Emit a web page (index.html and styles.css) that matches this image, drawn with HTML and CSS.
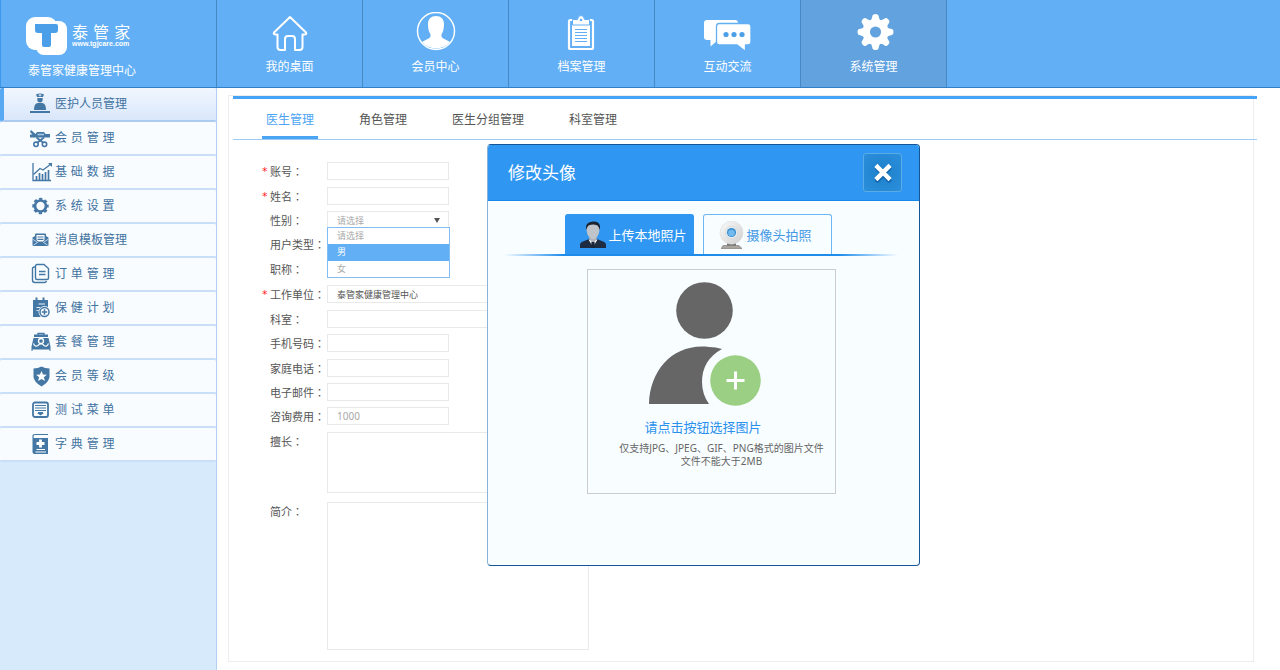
FILE: index.html
```html
<!DOCTYPE html>
<html lang="zh-CN">
<head>
<meta charset="utf-8">
<title>泰管家健康管理中心</title>
<link rel="stylesheet" href="styles.css">
</head>
<body>
<header class="topbar">
  <div class="brand">
    <div class="brand-main">
      <svg class="brand-logo" viewBox="0 0 42 40" aria-hidden="true">
        <rect x="0" y="1" width="31" height="33" rx="9" fill="#fff"/>
        <rect x="10" y="5" width="31" height="34" rx="8" fill="#fff"/>
        <path d="M9 8H30Q32 8 32 10V14Q32 17 29 17H25V29Q25 31 23 31H18Q16 31 16 29V17H12Q9 17 9 14Z" fill="#4b9fe8"/>
      </svg>
      <div class="brand-words">
        <span class="brand-name">泰 管 家</span>
        <span class="brand-url">www.tgjcare.com</span>
      </div>
    </div>
    <span class="brand-center">泰管家健康管理中心</span>
  </div>
  <nav class="mainnav">
    <a class="navitem" href="#">
      <svg class="navicon" viewBox="0 0 48 40" fill="none" stroke="#fff" stroke-width="2" stroke-linejoin="round" aria-hidden="true"><path d="M24 5L40 20.500Q41 22.500 38.500 22.500H36.500V35Q36.500 38 33.500 38H29V27Q29 24 26 24H22Q19 24 19 27V38H14.500Q11.500 38 11.500 35V22.500H9.500Q7 22.500 8 20.500Z"/></svg>
      <span>我的桌面</span>
    </a>
    <a class="navitem" href="#">
      <svg class="navicon" viewBox="0 0 48 40" aria-hidden="true"><circle cx="24" cy="19" r="18.500" fill="none" stroke="#fff" stroke-width="1.500"/><path d="M24 4C29 4 32 7 32 12C32 17 31 20 29.500 22.500C29 25 30.500 26 32.500 27L38 30A18.500 18.500 0 0 1 10 30L15.500 27C17.500 26 19 25 18.500 22.500C17 20 16 17 16 12C16 7 19 4 24 4Z" fill="#fff"/></svg>
      <span>会员中心</span>
    </a>
    <a class="navitem" href="#">
      <svg class="navicon" viewBox="0 0 48 40" aria-hidden="true"><rect x="11" y="8" width="24" height="29" rx="1.500" fill="none" stroke="#fff" stroke-width="2.200"/><rect x="14" y="11" width="18" height="23" fill="#fff"/><path d="M14.500 7.500H19.500Q20 3.500 23 3.500T26.500 7.500H31.500V13H14.500Z" fill="#fff" stroke="#62aff5" stroke-width="1"/><circle cx="23" cy="8" r="1.300" fill="#62aff5"/><path d="M17 17.500H29M17 20.500H29M17 23.500H29M17 26.500H29M17 29.500H29" stroke="#62aff5" stroke-width="1.200"/></svg>
      <span>档案管理</span>
    </a>
    <a class="navitem" href="#">
      <svg class="navicon" viewBox="0 0 48 40" aria-hidden="true"><path d="M3 8H31Q34 8 34 11V28H14L6.500 34.500V28H3Q0 28 0 25V11Q0 8 3 8Z" fill="#fff"/><path d="M15 11.500H44Q47 11.500 47 14.500V30Q47 33 44 33H41.500V39.500L33 33H15Q12.500 33 12.500 30V14.500Q12.500 11.500 15 11.500Z" fill="#fff" stroke="#62aff5" stroke-width="1.300"/><circle cx="22" cy="22.500" r="2.600" fill="#4d9fe8"/><circle cx="30" cy="22.500" r="2.600" fill="#4d9fe8"/><circle cx="38" cy="22.500" r="2.600" fill="#4d9fe8"/></svg>
      <span>互动交流</span>
    </a>
    <a class="navitem navitem-active" href="#">
      <svg class="navicon" viewBox="0 0 48 40" aria-hidden="true">
        <g transform="translate(25.500 20)" fill="#fff">
          <path id="tooth" d="M-5 -11C-3.500 -13 -3.500 -15 -3 -16.500Q-2.500 -18 0 -18T3 -16.500C3.500 -15 3.500 -13 5 -11Z"/>
          <use href="#tooth" transform="rotate(45)"/><use href="#tooth" transform="rotate(90)"/><use href="#tooth" transform="rotate(135)"/><use href="#tooth" transform="rotate(180)"/><use href="#tooth" transform="rotate(225)"/><use href="#tooth" transform="rotate(270)"/><use href="#tooth" transform="rotate(315)"/>
          <circle r="9.300" fill="none" stroke="#fff" stroke-width="7.500"/>
        </g>
      </svg>
      <span>系统管理</span>
    </a>
  </nav>
</header>

<div class="layout">
  <nav class="sidebar">
    <a class="sideitem sideitem-active" href="#"><svg class="sideicon" viewBox="0 0 22 22" aria-hidden="true"><path d="M6 1.500Q10 -0.500 14 1.500L13 4H7Z"/><path d="M8.500 2.200H11.500M10 1V3.500" stroke="#fff" stroke-width="0.700"/><path d="M7.300 5H12.700V6.500A2.700 3 0 0 1 7.300 6.500Z"/><path d="M7.500 10H12.500Q16 10.500 16 17H13.500V13.500V17H6.500V13.500V17H4Q4 10.500 7.500 10Z"/><path d="M0 18H20V20H0Z"/></svg>医护人员管理</a>
    <a class="sideitem" href="#"><svg class="sideicon" viewBox="0 0 22 22" aria-hidden="true"><path d="M1 3L5.500 7H20V10.500H0V7.500H2.500L0 5Z"/><path d="M5.500 7L7 5H14L15.500 7Z"/><path d="M7.500 7.500H14" stroke="#a9c8e2" stroke-width="1.600"/><path d="M6.500 10.500L13 15.500M14 10.500L7.500 15.500" stroke="#4577a5" stroke-width="1.800"/><g fill="none" stroke="#4577a5" stroke-width="1.600"><circle cx="6" cy="17.300" r="2.200"/><circle cx="14.500" cy="17.300" r="2.200"/></g></svg>会 员 管 理</a>
    <a class="sideitem" href="#"><svg class="sideicon" viewBox="0 0 22 22" aria-hidden="true"><g fill="none" stroke="#4577a5"><path d="M3 2V19.500H21" stroke-width="1.300"/><path d="M6.500 19V15M9.500 19V12M12.500 19V13M15.500 19V11M18.500 19V9" stroke-width="1.700"/><path d="M3.500 13.500L10 7.500L13 9L21 3" stroke-width="1.300"/></g><path d="M18 2H22V6Z"/></svg>基 础 数 据</a>
    <a class="sideitem" href="#"><svg class="sideicon" viewBox="0 0 22 22" aria-hidden="true"><circle cx="10.500" cy="11" r="5.500" fill="none" stroke="#4577a5" stroke-width="2.700"/><circle cx="10.500" cy="11" r="7.200" fill="none" stroke="#4577a5" stroke-width="2" stroke-dasharray="3.200 2.450" stroke-dashoffset="1.600"/></svg>系 统 设 置</a>
    <a class="sideitem" href="#"><svg class="sideicon" viewBox="0 0 22 22" aria-hidden="true"><path d="M2.500 8.500L5 7V5.500Q5 4.500 6 4.500H15Q16 4.500 16 5.500V7L18.500 8.500V16Q18.500 17 17.500 17H3.500Q2.500 17 2.500 16Z"/><path d="M6.500 6H14.500V11L13 12.500H8L6.500 11Z" fill="#fff"/><path d="M7.500 8H13.500M7.500 10.300H13.500" stroke="#4577a5" stroke-width="1.200"/><path d="M2.500 10L7.500 13.500L3.500 16M18.500 10L13.500 13.500L17.500 16" stroke="#dcebf8" stroke-width="0.800" fill="none"/></svg>消息模板管理</a>
    <a class="sideitem" href="#"><svg class="sideicon" viewBox="0 0 22 22" aria-hidden="true"><g fill="none" stroke="#4577a5" stroke-width="1.400"><path d="M5.500 3Q5.500 1.500 7 1.500H14L18.500 5.500V15Q18.500 16.500 17 16.500H7Q5.500 16.500 5.500 15Z"/><path d="M5 4H4.500Q2.500 4 2.500 6V17Q2.500 19.500 5 19.500H14.500Q16 19.500 16.500 18"/><path d="M9 8.500H15.500M9 11.500H15.500"/></g></svg>订 单 管 理</a>
    <a class="sideitem" href="#"><svg class="sideicon" viewBox="0 0 22 22" aria-hidden="true"><path d="M3 3H5.500V0.500H7.500V3H12.500V0.500H14.500V3H18V20H3Z"/><path d="M8.500 7H15M6.500 10.500H10M6.500 13.500H8.500" stroke="#e6f1fb" stroke-width="1.200"/><circle cx="14.500" cy="15" r="6" fill="#f9fcff"/><circle cx="14.500" cy="15" r="4.500" fill="none" stroke="#4577a5" stroke-width="1.500"/><path d="M11.800 15H17.200M14.500 12.300V17.700" stroke="#4577a5" stroke-width="1.500"/></svg>保 健 计 划</a>
    <a class="sideitem" href="#"><svg class="sideicon" viewBox="0 0 22 22" aria-hidden="true"><path d="M8 4V2.500H14V4" fill="none" stroke="#4577a5" stroke-width="1.300"/><path d="M4 3.500H18V6H4ZM3.500 7H18.500L20.500 15.500V20H19.500V18.500H2.500V20H1.500V15.500Z"/><circle cx="11" cy="10" r="2.500" fill="none" stroke="#fff" stroke-width="1.300"/><path d="M3.500 12.500Q5 16.500 8 14.500L9.500 13H12.500L14 14.500Q17 16.500 18.500 12.500" fill="none" stroke="#fff" stroke-width="1.200"/></svg>套 餐 管 理</a>
    <a class="sideitem" href="#"><svg class="sideicon" viewBox="0 0 22 22" aria-hidden="true"><path d="M11.500 1.500Q15 3.500 19.500 3.500V12Q19 17 11.500 21.500Q4 17 3.500 12V3.500Q8 3.500 11.500 1.500Z"/><path d="M11.500 6L13 9.500L16.800 9.800L13.900 12.200L14.900 15.900L11.500 13.900L8.100 15.900L9.100 12.200L6.200 9.800L10 9.500Z" fill="#fff"/></svg>会 员 等 级</a>
    <a class="sideitem" href="#"><svg class="sideicon" viewBox="0 0 22 22" aria-hidden="true"><rect x="3" y="3.500" width="15" height="14.500" rx="2" fill="none" stroke="#4577a5" stroke-width="1.800"/><path d="M5 6.500H16M5 9H16M5 11.500H16" stroke="#4577a5" stroke-width="1.100"/><path d="M8 13H13V14H14L10.500 16.500L7 14H8Z"/></svg>测 试 菜 单</a>
    <a class="sideitem" href="#"><svg class="sideicon" viewBox="0 0 22 22" aria-hidden="true"><path d="M18 1.500H5Q3 1.500 3 3.500V5" fill="none" stroke="#4577a5" stroke-width="1.200"/><path d="M2.500 5H18V21H4.500Q2.500 21 2.500 19Z"/><path d="M10.500 6.500V14.500M6.500 10.500H14.500" stroke="#fff" stroke-width="2.800"/><path d="M6.500 16.500H15M5.500 19H16" stroke="#fff" stroke-width="1"/></svg>字 典 管 理</a>
  </nav>

  <main class="panel">
    <div class="tabs" role="tablist">
      <button class="tab tab-active" role="tab" aria-selected="true">医生管理</button>
      <button class="tab" role="tab">角色管理</button>
      <button class="tab" role="tab">医生分组管理</button>
      <button class="tab" role="tab">科室管理</button>
    </div>
    <form class="form">
      <div class="row"><label class="label required" for="account">账号<span class="colon" lang="zh-TW">：</span></label><input class="field" id="account" type="text"></div>
      <div class="row row-tight"><label class="label required" for="name">姓名<span class="colon" lang="zh-TW">：</span></label><input class="field" id="name" type="text"></div>
      <div class="row row-tight"><label class="label" for="gender">性别<span class="colon" lang="zh-TW">：</span></label>
        <div class="selectbox">
          <select class="field select" id="gender"><option>请选择</option><option>男</option><option>女</option></select>
          <ul class="options" role="listbox" aria-label="性别">
            <li class="option" role="option">请选择</li>
            <li class="option option-active" role="option" aria-selected="true">男</li>
            <li class="option" role="option">女</li>
          </ul>
        </div>
      </div>
      <div class="row"><span class="label">用户类型<span class="colon" lang="zh-TW">：</span></span></div>
      <div class="row"><span class="label">职称<span class="colon" lang="zh-TW">：</span></span></div>
      <div class="row"><label class="label required" for="unit">工作单位<span class="colon" lang="zh-TW">：</span></label><input class="field field-wide" id="unit" type="text" value="泰管家健康管理中心"></div>
      <div class="row row-tight"><label class="label" for="dept">科室<span class="colon" lang="zh-TW">：</span></label><input class="field field-wide" id="dept" type="text"></div>
      <div class="row"><label class="label" for="mobile">手机号码<span class="colon" lang="zh-TW">：</span></label><input class="field" id="mobile" type="text"></div>
      <div class="row row-tight"><label class="label" for="phone">家庭电话<span class="colon" lang="zh-TW">：</span></label><input class="field" id="phone" type="text"></div>
      <div class="row row-tight"><label class="label" for="email">电子邮件<span class="colon" lang="zh-TW">：</span></label><input class="field" id="email" type="text"></div>
      <div class="row"><label class="label" for="fee">咨询费用<span class="colon" lang="zh-TW">：</span></label><input class="field field-number" id="fee" type="text" placeholder="1000"></div>
      <div class="row row-area"><label class="label" for="skill">擅长<span class="colon" lang="zh-TW">：</span></label><textarea class="field field-wide area" id="skill"></textarea></div>
      <div class="row row-area"><label class="label" for="intro">简介<span class="colon" lang="zh-TW">：</span></label><textarea class="field field-wide area area-tall" id="intro"></textarea></div>
    </form>
  </main>
</div>

<section class="dialog" role="dialog" aria-labelledby="dialog-title">
  <div class="dialog-head">
    <h2 class="dialog-title" id="dialog-title">修改头像</h2>
    <button class="close" aria-label="关闭"><svg class="close-icon" viewBox="0 0 20 20" aria-hidden="true"><path d="M4.500 5L16 17M16 5L4.500 17" stroke="#1264ac" stroke-width="5" stroke-linecap="round"/><path d="M4.500 4L15.500 15M15.500 4L4.500 15" stroke="#fff" stroke-width="4.500" stroke-linecap="square"/></svg></button>
  </div>
  <div class="dialog-body">
    <div class="phototabs" role="tablist">
      <button class="phototab phototab-active" role="tab" aria-selected="true">
        <svg class="photoicon" viewBox="0 0 28 28" aria-hidden="true"><path d="M1 27V24Q1 21.500 4 20.500L10 18H18L24 20.500Q27 21.500 27 24V27Z" fill="#1d2c40"/><path d="M9.500 18.500L14 26L18.500 18.500Z" fill="#fff"/><path d="M12.500 20.500H15.500L16 27H12Z" fill="#172536"/><path d="M10.500 15H17.500V19L14 21L10.500 19Z" fill="#aeb4ba"/><path d="M7.500 8Q7 1 14 1T20.500 8Q20.500 13 17.500 16.500Q14 19.500 10.500 16.500Q7.500 13 7.500 8Z" fill="#bec4c9"/><path d="M7 9Q5.500 1 14 0.500T21 9Q20 6 18.500 4.500Q14 2.500 9.500 4.500Q8 6 7 9Z" fill="#192331"/></svg>
        <span>上传本地照片</span>
      </button>
      <button class="phototab" role="tab">
        <svg class="photoicon" viewBox="0 0 28 28" aria-hidden="true"><defs><linearGradient id="shell" x1="0" y1="0" x2="1" y2="1"><stop offset="0" stop-color="#fafafa"/><stop offset="1" stop-color="#cfcfcf"/></linearGradient></defs><path d="M10 22H19V25H10Z" fill="#777"/><path d="M6 24.500H22L24.500 27V28H4.500V27Z" fill="#aaa49f" stroke="#777" stroke-width="0.600"/><circle cx="14.500" cy="11.700" r="11.500" fill="url(#shell)" stroke="#d9d9d9" stroke-width="0.500"/><circle cx="14.500" cy="11.500" r="6.200" fill="#e9edef" stroke="#cdd2d5" stroke-width="0.600"/><circle cx="14.500" cy="11.500" r="4.600" fill="#3a8fcd"/><circle cx="14.500" cy="12" r="3.300" fill="#73baf0"/></svg>
        <span>摄像头拍照</span>
      </button>
    </div>
    <div class="divider"></div>
    <div class="upload">
      <button class="upload-button">
        <svg class="avatar" viewBox="0 0 112 126" aria-hidden="true"><circle cx="55.500" cy="28.500" r="28.300" fill="#666"/><path d="M0 122C1 87 25 61 60 65Q67 65 73 67Q53 78 53 100Q53 112 60 122Z" fill="#666"/><circle cx="86.500" cy="98.500" r="25.300" fill="#9bcf84"/><path d="M77.500 98.500H95.500M86.500 89.500V107.500" stroke="#fff" stroke-width="3"/></svg>
        <span class="upload-link">请点击按钮选择图片</span>
      </button>
      <p class="upload-note">仅支持JPG、JPEG、GIF、PNG格式的图片文件<br>文件不能大于2MB</p>
    </div>
  </div>
</section>
</body>
</html>
```

FILE: styles.css
```css
* { box-sizing: border-box; }

body {
  margin: 0;
  min-height: 100vh;
  display: flex;
  flex-direction: column;
  position: relative;
  background: #fff;
  color: #555;
  font: 12px/18px "DejaVu Sans", "Noto Sans CJK SC", sans-serif;
}

a { color: inherit; text-decoration: none; }

button, input, select, textarea {
  font-family: "Noto Sans", "Noto Sans CJK SC", sans-serif;
  margin: 0;
}

button { background: none; border: 0; padding: 0; cursor: pointer; }

/* Top bar */
.topbar {
  display: flex;
  background: #62aff5;
  border-bottom: 1px solid #2f80c8;
  color: #fff;
}

.brand {
  width: 217px;
  padding: 16px 0 7px 25px;
  border-right: 1px solid #4688c2;
  border-left: 1px solid #3d97ec;
}

.brand-main { display: flex; gap: 4px; height: 46px; }
.brand-logo { width: 42px; height: 40px; }
.brand-words { display: flex; flex-direction: column; padding-top: 8px; }
.brand-name { font-size: 16px; line-height: 17px; }
.brand-url { font: bold 7px/6px "Liberation Sans", sans-serif; }
.brand-center { display: block; padding-left: 2px; line-height: 18px; }

.mainnav { display: flex; }

.navitem {
  width: 146px;
  padding: 12px 0 11px;
  display: flex;
  flex-direction: column;
  align-items: center;
  gap: 6px;
  border-right: 1px solid #4688c2;
}

.navitem-active { background: #62a3df; }
.navicon { width: 48px; height: 40px; }

/* Page */
.layout { flex: 1; display: flex; }

.sidebar { width: 217px; background: #d7eafb; border-right: 1px solid #b4d1f3; }

.sideitem {
  height: 34px;
  padding-left: 30px;
  display: flex;
  align-items: center;
  gap: 3px;
  background: #f9fcff;
  border-bottom: 2px solid #c9dff7;
  border-radius: 2px;
  color: #41729f;
}

.sideitem-active {
  padding-left: 26px;
  border-left: 4px solid #57a9f4;
  background: linear-gradient(#f2f7fe, #d9e7fb);
  border-bottom-color: #adcbf0;
}

.sideicon { width: 22px; height: 22px; fill: #4577a5; }

.panel {
  flex: 1;
  margin: 7px 26px 8px 11px;
  border: 1px solid #ededed;
}

.tabs {
  margin: 0 -4px 0 4px;
  padding-left: 29px;
  height: 44px;
  display: flex;
  gap: 37px;
  border-top: 3px solid #46a3f5;
  border-bottom: 1px solid #9ccbf8;
}

.tab {
  padding: 4px 4px 0;
  border-bottom: 3px solid transparent;
  font-size: 12px;
  line-height: 18px;
  color: #555;
}

.tab-active { color: #4ba4f2; border-bottom-color: #4ba4f2; }

/* Form */
.form { padding: 19px 0 11px 33px; }

.row {
  display: flex;
  align-items: flex-start;
  height: 25px;
  padding-top: 3px;
}

.row-tight { height: 24px; }
.row-area { height: auto; margin-bottom: 6px; }
.row-area:last-child { margin-bottom: 0; }

.label {
  width: 65px;
  padding-left: 8px;
  position: relative;
  font-size: 11px;
  line-height: 18px;
  white-space: nowrap;
}

.colon { font-family: "Noto Sans CJK TC", sans-serif; }

.required::before {
  content: "*";
  position: absolute;
  left: 0;
  top: 1px;
  color: #f22;
}

.field {
  width: 122px;
  height: 18px;
  padding: 0 9px;
  border: 1px solid #e9e9e9;
  border-radius: 0;
  background: #fff;
  color: #555;
  font-size: 9px;
}

.field-wide { width: 262px; }
.field-number { font-size: 10px; }
.field::placeholder { color: #aaa; }

.area { height: 61px; resize: none; }
.area-tall { height: 148px; }

.selectbox { position: relative; }

.select { display: block; appearance: none; color: #aaa; }

.selectbox::after {
  content: "";
  position: absolute;
  right: 9px;
  top: 7px;
  border: 3px solid transparent;
  border-top: 5px solid #555;
  border-bottom: 0;
}

.options {
  position: absolute;
  left: 0;
  top: 16px;
  z-index: 1;
  width: 123px;
  margin: 0;
  padding: 0;
  list-style: none;
  background: #fff;
  border: 1px solid #82bdf3;
}

.option { padding-left: 9px; font-size: 9px; line-height: 16px; color: #aaa; }
.option-active { background: #62aff5; color: #fff; line-height: 17px; }

/* Avatar dialog */
.dialog {
  position: absolute;
  left: 487px;
  top: 144px;
  width: 433px;
  z-index: 2;
  border: 1px solid #145596;
  border-left-color: #8ab3d5;
  border-radius: 4px;
  overflow: hidden;
  background: #f8fdff;
}

.dialog-head {
  height: 56px;
  padding: 0 17px 0 20px;
  display: flex;
  align-items: center;
  justify-content: space-between;
  background: #2f97f2;
  border-bottom: 1px solid #1688eb;
}

.dialog-title {
  margin: 0;
  font-size: 17px;
  line-height: 24px;
  font-weight: normal;
  color: #fff;
}

.close {
  width: 39px;
  height: 39px;
  display: grid;
  place-items: center;
  border: 1px solid #5aabe6;
  border-radius: 3px;
  background: radial-gradient(#1d80c9, #2b8fdd);
}

.close-icon { width: 20px; height: 20px; }

.dialog-body { padding: 13px 16px 71px; }

.phototabs { display: flex; justify-content: center; gap: 9px; padding-right: 11px; }

.phototab {
  width: 129px;
  height: 40px;
  padding-left: 13px;
  display: flex;
  align-items: center;
  gap: 2px;
  border: 1px solid #6db7f5;
  border-bottom: 0;
  border-radius: 3px 3px 0 0;
  font-size: 13px;
  line-height: 20px;
  white-space: nowrap;
  color: #4599e6;
}

.phototab-active { background: #2f97f2; border-color: #2f97f2; color: #fff; }
.photoicon { width: 28px; height: 28px; }

.divider {
  height: 2px;
  margin: 0 5px 13px 0;
  background: linear-gradient(90deg, transparent, #1f8cec 15%, #1f8cec 85%, transparent);
}

.upload {
  width: 249px;
  height: 225px;
  margin: 0 auto 0 83px;
  padding: 12px 0 0;
  border: 1px solid #ccc;
  text-align: center;
}

.upload-button { display: block; width: 100%; padding-right: 17px; }
.avatar { display: block; width: 112px; height: 126px; margin: 0 auto 9px 61px; }
.upload-link { display: block; font-size: 13px; line-height: 20px; color: #2a90ee; }

.upload-note {
  margin: 5px 0 0 20px;
  font: 10px/13px "Noto Sans", "Noto Sans CJK SC", sans-serif;
  color: #666;
}
```
